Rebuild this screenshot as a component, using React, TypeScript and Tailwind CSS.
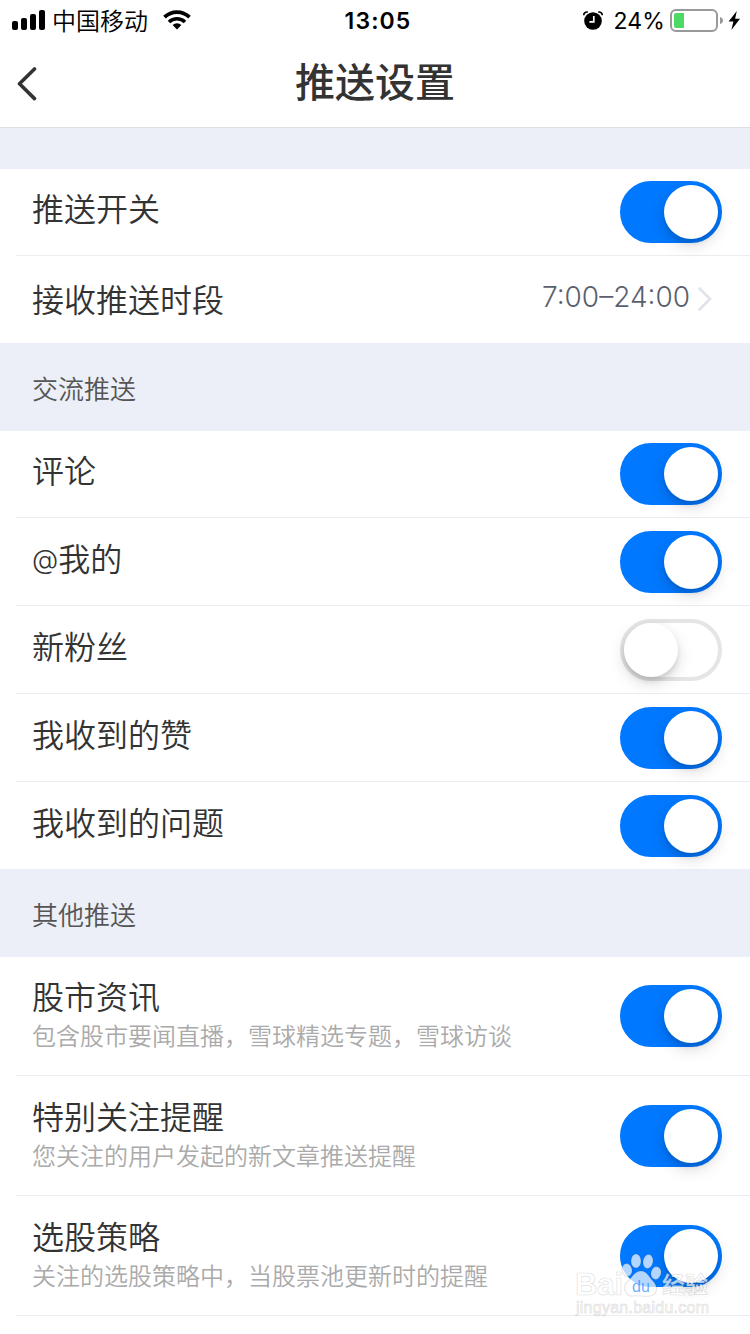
import classnames from 'clsx';

type SettingItem = {
  label: string;
  description?: string;
  enabled?: boolean;
  value?: string;
};

type SettingGroup = {
  title?: string;
  items: SettingItem[];
};

const groups: SettingGroup[] = [
  {
    items: [
      { label: '推送开关', enabled: true },
      { label: '接收推送时段', value: '7:00–24:00' },
    ],
  },
  {
    title: '交流推送',
    items: [
      { label: '评论', enabled: true },
      { label: '@我的', enabled: true },
      { label: '新粉丝', enabled: false },
      { label: '我收到的赞', enabled: true },
      { label: '我收到的问题', enabled: true },
    ],
  },
  {
    title: '其他推送',
    items: [
      { label: '股市资讯', description: '包含股市要闻直播，雪球精选专题，雪球访谈', enabled: true },
      { label: '特别关注提醒', description: '您关注的用户发起的新文章推送提醒', enabled: true },
      { label: '选股策略', description: '关注的选股策略中，当股票池更新时的提醒', enabled: true },
      { label: '' },
    ],
  },
];

const StatusBar = () => (
  <div className="flex h-10 items-center justify-between pl-3 pr-2 text-black">
    <div className="flex w-[250px] items-center">
      <svg className="h-5 w-[34px]" viewBox="0 0 34 20">
        <rect x="0" y="11" width="6" height="9" rx="2" />
        <rect x="9" y="8" width="6" height="12" rx="2" />
        <rect x="18" y="4" width="6" height="16" rx="2" />
        <rect x="27" y="0" width="6" height="20" rx="2" />
      </svg>
      <span className="ml-[6px] text-[24px] leading-10 font-[350] whitespace-nowrap">中国移动</span>
      <svg className="ml-[15px] h-5 w-7" viewBox="0 0 28 20" fill="none" stroke="black">
        <path d="M1.5 7.2a18 18 0 0 1 25 0" strokeWidth="3.8" />
        <path d="M6 12a11.6 11.6 0 0 1 16 0" strokeWidth="3.6" />
        <path d="M14 19.6l-4.4-4.5a6.4 6.4 0 0 1 8.8 0z" fill="black" stroke="none" />
      </svg>
    </div>
    <span className="pt-[2px] pl-[2px] font-[Inter,sans-serif] text-[23px] font-semibold tracking-[1.1px]">13:05</span>
    <div className="flex w-[250px] items-center justify-end">
      <svg className="h-[19px] w-5" viewBox="0 0 20 19">
        <circle cx="10" cy="10" r="8.8" />
        <path d="M0.8 4.2a3 3 0 0 1 4-3M19.2 4.2a3 3 0 0 0-4-3" fill="none" stroke="black" strokeWidth="1.7" />
        <path d="M10.8 5v5.8H6.4" fill="none" stroke="white" strokeWidth="1.7" />
      </svg>
      <span className="ml-[11px] pt-[2px] font-[Inter,sans-serif] text-[23px] tracking-[0.1px]">24%</span>
      <svg className="ml-[5px] h-[23px] w-[72px]" viewBox="0 0 72 23">
        <rect x="1" y="1" width="46" height="21" rx="5" fill="none" stroke="#999" strokeWidth="2" />
        <path d="M4 6a2 2 0 0 1 2-2h8v15H6a2 2 0 0 1-2-2z" fill="#4cd964" />
        <path d="M50 8q3 1 3 3.5T50 15z" fill="#999" />
        <path d="M66.8 2L58.6 12.6h4.8L61.4 21l8.6-11.2h-4.9z" />
      </svg>
    </div>
  </div>
);

const Header = () => (
  <header className="h-32 border-b border-[#dce0e3] bg-white">
    <StatusBar />
    <div className="flex h-[87px] items-start pl-4">
      <button type="button" aria-label="返回" className="mt-[25px] flex w-8">
        <svg className="h-9 w-6" viewBox="0 0 24 36" fill="none" stroke="#333" strokeWidth="3.6">
          <path d="M18.5 4L3.5 18.8L18.5 33.6" strokeLinecap="round" strokeLinejoin="round" />
        </svg>
      </button>
      <h1 className="mr-12 flex-1 text-center text-[40px] leading-[80px] font-medium text-[#333]">推送设置</h1>
    </div>
  </header>
);

const Toggle = ({ enabled }: { enabled: boolean }) => (
  <button
    type="button"
    role="switch"
    aria-checked={enabled}
    className={classnames(
      'flex h-[62px] w-[102px] shrink-0 rounded-full border-4',
      enabled ? 'justify-end border-[#0078ff] bg-[#0078ff]' : 'justify-start border-[#e5e5e5] bg-white'
    )}
  >
    <span className="size-[54px] rounded-full bg-white shadow-[0_6px_16px_rgba(0,0,0,0.15),0_4px_5px_rgba(0,0,0,0.1)]" />
  </button>
);

const SettingLabel = ({ label }: { label: string }) =>
  label.startsWith('@') ? (
    <>
      <span className="relative -top-[2px] font-[Inter,sans-serif] text-[27px] leading-none font-light">@</span>
      {label.slice(1)}
    </>
  ) : (
    <>{label}</>
  );

const SettingRow = ({ item, first, last }: { item: SettingItem; first: boolean; last: boolean }) => {
  const tall = !!item.description;

  return (
    <div
      className={classnames(
        'ml-4 flex items-end justify-between pl-4 pr-7',
        tall ? (first ? 'h-[119px] pb-7' : 'h-[120px] pb-7') : first || last ? 'h-[87px] pb-3' : 'h-[88px] pb-3',
        !last && 'border-b border-[#ebedf3]'
      )}
    >
      <div className={classnames('flex flex-col', tall ? '-mb-[6px]' : item.value ? 'mb-2' : 'mb-[11px]')}>
        <span
          className={classnames('text-[32px] font-[350] text-[#333]', tall ? 'mb-px leading-[42px]' : 'leading-[50px]')}
        >
          <SettingLabel label={item.label} />
        </span>
        {tall && <span className="text-[24px] leading-9 font-[350] text-[#aaa]">{item.description}</span>}
      </div>
      {item.enabled !== undefined && <Toggle enabled={item.enabled} />}
      {item.value && (
        <div className="mr-[10px] mb-[13px] flex items-center font-[Inter,sans-serif] text-[28px] leading-9 font-[350] text-[#5a606e]">
          <span className="mb-[3px]">{item.value}</span>
          <svg className="ml-2 h-6 w-[14px]" viewBox="0 0 14 24" fill="none" stroke="#e0e2e9" strokeWidth="2.6">
            <path d="M1.5 1.5L12 12L1.5 22.5" strokeLinecap="round" />
          </svg>
        </div>
      )}
    </div>
  );
};

const Watermark = () => (
  <svg
    className="absolute top-[1250px] left-[570px] h-[72px] w-[150px]"
    viewBox="0 0 150 72"
    fill="white"
    fillOpacity="0.7"
    stroke="#000"
    strokeOpacity="0.1"
    strokeWidth="1.2"
  >
    <text x="5" y="45" fontFamily="Liberation Sans, sans-serif" fontWeight="700" fontSize="31" textLength="48">
      Bai
    </text>
    <ellipse cx="57" cy="20" rx="5" ry="6.5" transform="rotate(-12 57 20)" />
    <ellipse cx="66" cy="11" rx="5" ry="7" />
    <ellipse cx="78" cy="11.5" rx="5" ry="7" transform="rotate(10 78 11.5)" />
    <ellipse cx="86" cy="23" rx="5" ry="6.5" transform="rotate(12 86 23)" />
    <path d="M71 21c6 0 8 6 12 10c5 5 5 14-3 15c-6 1-12-1-17 0c-7 1-11-8-6-14c5-4 7-11 14-11z" />
    <text x="62" y="42" fontFamily="Liberation Sans, sans-serif" fontSize="16" fill="#0078ff" fillOpacity="0.6" stroke="none">
      du
    </text>
    <text x="92" y="43" fontFamily="Noto Sans CJK SC, sans-serif" fontWeight="700" fontSize="23">
      经验
    </text>
    <text x="6" y="63" fontFamily="Liberation Sans, sans-serif" fontSize="16" textLength="133">
      jingyan.baidu.com
    </text>
  </svg>
);

export default function App() {
  return (
    <div className="relative h-[1334px] w-[750px] overflow-hidden bg-white font-['Noto_Sans_CJK_SC',sans-serif]">
      <Header />
      {groups.map((group, i) => (
        <section key={i}>
          {group.title ? (
            <h2 className="h-[88px] bg-[#eceff7] pl-8 text-[26px] leading-[90px] font-[350] text-[#555]">
              {group.title}
            </h2>
          ) : (
            <div className="h-[41px] bg-[#eceff7]" />
          )}
          {group.items.map((item, j) => (
            <SettingRow key={j} item={item} first={j === 0} last={j === group.items.length - 1} />
          ))}
        </section>
      ))}
      <Watermark />
    </div>
  );
}
